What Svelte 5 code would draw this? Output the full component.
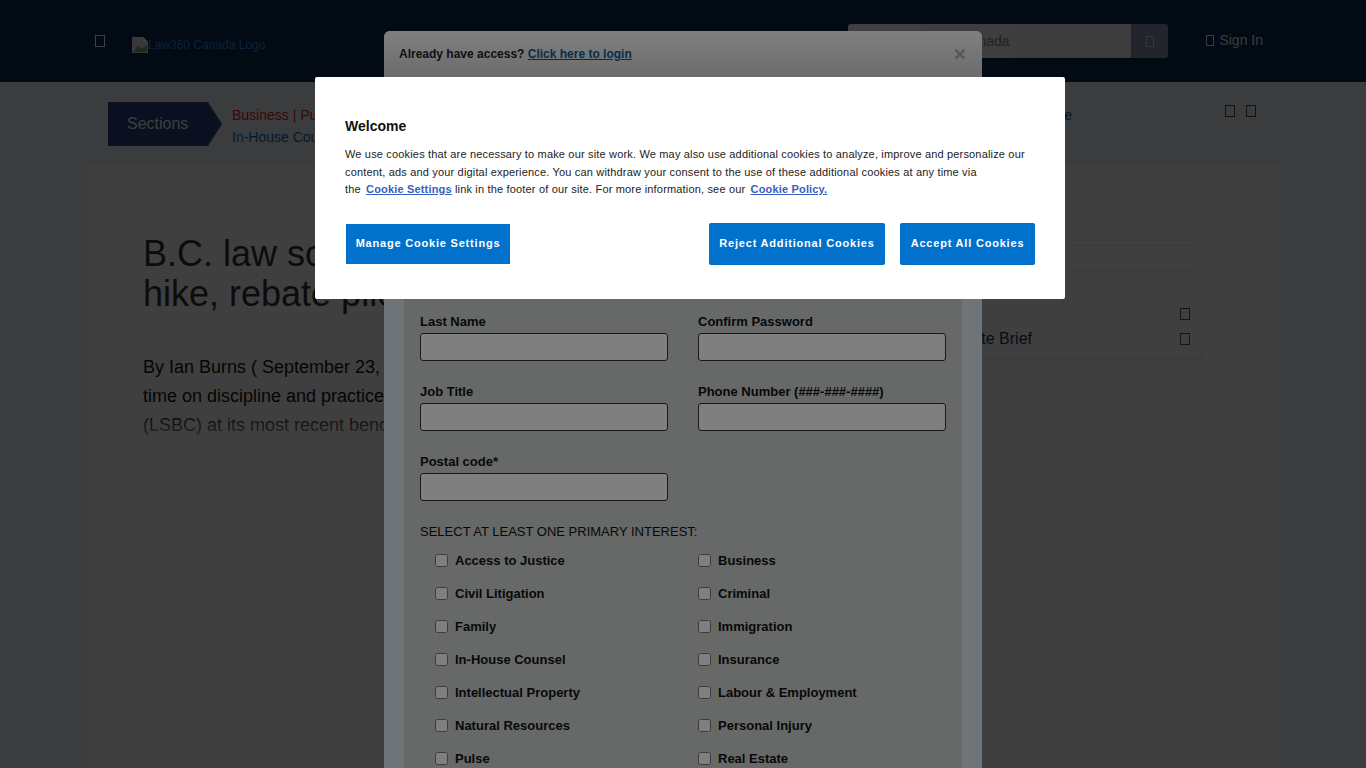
<script>
  const navLead = 'Business | Pulse | Access to Justice | Civil Litigation | Criminal | Family | Immigration | Insurance |';
  const fields = [
    ['First Name', 'Password'],
    ['Last Name', 'Confirm Password'],
    ['Job Title', 'Phone Number (###-###-####)'],
    ['Postal code*', null]
  ];
  const interests = [
    'Access to Justice', 'Business', 'Civil Litigation', 'Criminal', 'Family', 'Immigration',
    'In-House Counsel', 'Insurance', 'Intellectual Property', 'Labour & Employment',
    'Natural Resources', 'Personal Injury', 'Pulse', 'Real Estate'
  ];
</script>

<div class="page">
  <header class="topbar">
    <div class="brand">
      <span class="tofu menu"></span>
      <span class="logo">
        <svg class="broken" width="16" height="16" viewBox="0 0 16 16" aria-hidden="true">
          <path d="M0 0H11L16 5V16H0Z" fill="#e4e4e4" />
          <path d="M1 15L6 9L10 12L15 8V15Z" fill="#7fae6a" />
          <path d="M11 0L16 5H11Z" fill="#fff" />
        </svg>
        <span>Law360 Canada Logo</span>
      </span>
    </div>
    <div class="tools">
      <div class="search">
        <span class="field">Search Law360 Canada</span>
        <span class="go"><span class="tofu small"></span></span>
      </div>
      <span class="signin"><span class="tofu small"></span>Sign In</span>
    </div>
  </header>

  <div class="sections">
    <div class="tag">Sections</div>
    <div class="links">
      <div class="row red"><span>{navLead}</span><span class="last">Real Estate</span></div>
      <div class="row blue">In-House Counsel</div>
    </div>
    <div class="share"><span class="tofu"></span><span class="tofu"></span></div>
  </div>

  <main class="card">
    <article class="article">
      <h1>B.C. law society approves fee<br />hike, rebate pilot program</h1>
      <div class="story">
        <p>By Ian Burns ( September 23, 2024, 3:42 PM EDT) -- The Law Society of British<br />time on discipline and practice issues was discussed by the Law Society of BC<br />(LSBC) at its most recent bencher meeting</p>
        <div class="fade"></div>
      </div>
    </article>
    <aside class="side">
      <div class="rule first"></div>
      <div class="rule second"></div>
      <div class="side-row"><span>Daily Newsletter</span><span class="tofu"></span></div>
      <div class="side-row"><span>Law360 Corporate Brief</span><span class="tofu"></span></div>
    </aside>
  </main>
</div>

<div class="dim first-dim"></div>

<section class="modal">
  <div class="modal-head">
    <span class="access">Already have access? <a href="#login">Click here to login</a></span>
    <span class="close">×</span>
  </div>
  <div class="modal-body">
    <form class="form">
      <div class="grid">
        {#each fields as pair}
          {#each pair as label}
            <div class="control">
              {#if label}
                <span class="label">{label}</span>
                <span class="input"></span>
              {/if}
            </div>
          {/each}
        {/each}
      </div>
      <p class="select">SELECT AT LEAST ONE PRIMARY INTEREST:</p>
      <div class="checks">
        {#each interests as item}
          <label class="check"><input type="checkbox" /><span>{item}</span></label>
        {/each}
      </div>
    </form>
  </div>
</section>

<div class="dim second-dim"></div>

<section class="cookie">
  <h2>Welcome</h2>
  <p>We use cookies that are necessary to make our site work. We may also use additional cookies to analyze, improve and personalize our<br />content, ads and your digital experience. You can withdraw your consent to the use of these additional cookies at any time via<br />the <a href="#settings">Cookie Settings</a> link in the footer of our site. For more information, see our <a href="#policy">Cookie Policy.</a></p>
  <div class="actions">
    <button class="manage">Manage Cookie Settings</button>
    <div class="right">
      <button class="reject">Reject Additional Cookies</button>
      <button class="accept">Accept All Cookies</button>
    </div>
  </div>
</section>

<style>
  :global(html), :global(body) {
    margin: 0;
    height: 100%;
    overflow: hidden;
  }
  :global(body) {
    font-family: "Liberation Sans", Arial, sans-serif;
    background: #eef1f3;
  }

  .page {
    height: 768px;
    overflow: hidden;
    background: #eef3f5;
  }
  .tofu {
    display: inline-block;
    box-sizing: border-box;
    width: 10px;
    height: 12px;
    border: 1px solid currentColor;
    flex: none;
  }
  .tofu.small {
    width: 8px;
    height: 11px;
  }

  .topbar {
    height: 82px;
    box-sizing: border-box;
    background: #082850;
    display: flex;
    justify-content: space-between;
    padding: 24px 103px 0 95px;
    color: #e8f0f4;
  }
  .brand {
    display: flex;
    align-items: flex-start;
    gap: 27px;
  }
  .menu {
    margin-top: 11px;
    color: #fff;
  }
  .logo {
    display: flex;
    align-items: center;
    margin-top: 13px;
    font-size: 12px;
    line-height: 16px;
    color: #3088e0;
  }
  .tools {
    display: flex;
    align-items: flex-start;
    gap: 38px;
  }
  .search {
    display: flex;
    width: 320px;
    height: 34px;
    border-radius: 3px;
    overflow: hidden;
  }
  .field {
    flex: 1;
    background: linear-gradient(90deg, #fff, #f2f2f2);
    color: #888;
    font-size: 14px;
    line-height: 34px;
    padding-left: 11px;
    border-right: 1px solid #888;
  }
  .go {
    width: 36px;
    background: #8c96b4;
    color: #d8e0e8;
    display: flex;
    align-items: center;
    justify-content: center;
  }
  .signin {
    display: flex;
    align-items: center;
    gap: 5px;
    font-size: 14px;
    line-height: 32px;
  }

  .sections {
    display: flex;
    align-items: flex-start;
    height: 83px;
    box-sizing: border-box;
    padding: 20px 110px 0 108px;
  }
  .tag {
    position: relative;
    width: 100px;
    height: 44px;
    flex: none;
    box-sizing: border-box;
    padding-left: 19px;
    background: #29417d;
    color: #f6f8fa;
    font-size: 16px;
    line-height: 43px;
  }
  .tag::after {
    content: "";
    position: absolute;
    left: 100px;
    top: 0;
    border-left: 14px solid #29417d;
    border-top: 22px solid transparent;
    border-bottom: 22px solid transparent;
  }
  .links {
    margin-left: 24px;
    font-size: 14px;
    line-height: 22px;
    width: 840px;
    flex: none;
    margin-top: 2px;
  }
  .row {
    white-space: nowrap;
  }
  .red {
    display: flex;
    justify-content: space-between;
    color: #e01f26;
  }
  .last {
    color: #0d4ea0;
  }
  .blue {
    color: #0d6bb0;
  }
  .share {
    display: flex;
    gap: 11px;
    margin-left: 153px;
    margin-top: 3px;
    color: #444;
  }

  .card {
    margin: 0 86px 0 88px;
    height: 603px;
    background: #fff;
    box-sizing: border-box;
    padding: 69px 78px 0 55px;
    display: flex;
    justify-content: space-between;
    color: #222;
  }
  .article {
    width: 660px;
  }
  h1 {
    margin: 0;
    font-size: 36px;
    line-height: 40px;
    font-weight: 400;
    color: #333;
    white-space: nowrap;
  }
  .story {
    position: relative;
    margin-top: 39px;
  }
  .story p {
    margin: 0;
    font-size: 18px;
    line-height: 29px;
    color: #111;
    white-space: nowrap;
  }
  .fade {
    position: absolute;
    left: 0;
    right: -60px;
    top: 58px;
    height: 40px;
    background: linear-gradient(180deg, rgba(255, 255, 255, 0), rgba(255, 255, 255, 0.95));
  }
  .side {
    width: 352px;
    height: 126px;
    box-sizing: border-box;
    border: 1px solid #ececec;
    padding: 10px 9px 0 10px;
  }
  .rule {
    border-top: 1px solid #e8e8e8;
  }
  .rule.second {
    margin-top: 24px;
    margin-bottom: 30px;
  }
  .side-row {
    display: flex;
    justify-content: space-between;
    align-items: center;
    height: 25px;
    font-size: 16px;
    color: #15395c;
    padding: 0 2px;
  }
  .side-row .tofu {
    color: #555;
  }

  .dim {
    position: fixed;
    inset: 0;
    background: rgba(0, 0, 0, 0.5);
  }
  .first-dim {
    z-index: 10;
  }
  .second-dim {
    z-index: 30;
  }

  .modal {
    position: fixed;
    z-index: 20;
    left: 384px;
    top: 31px;
    width: 598px;
    height: 1100px;
    border-radius: 6px 6px 0 0;
    background: #fff;
    overflow: hidden;
    color: #111;
  }
  .modal-head {
    height: 46px;
    display: flex;
    justify-content: space-between;
    align-items: center;
    padding: 0 15px;
    background: linear-gradient(180deg, #fff, #d8d8d8);
  }
  .access {
    font-size: 12px;
    font-weight: 700;
    color: #222;
  }
  .access a {
    color: #0a5d9c;
  }
  .close {
    font-size: 21px;
    font-weight: 700;
    color: #aaa;
    margin-right: 1px;
  }
  .modal-body {
    background: #dde8ee;
    padding: 0 20px;
    height: 100%;
  }
  .form {
    background: #ccd2d0;
    padding: 158px 16px 0;
    height: 100%;
    box-sizing: border-box;
  }
  .grid {
    display: grid;
    grid-template-columns: 248px 248px;
    column-gap: 30px;
    row-gap: 14px;
  }
  .control {
    height: 56px;
    display: flex;
    flex-direction: column;
  }
  .label {
    box-sizing: border-box;
    font-size: 13px;
    font-weight: 700;
    line-height: 16px;
    height: 28px;
    padding-top: 9px;
    color: #111;
  }
  .input {
    height: 28px;
    box-sizing: border-box;
    border: 1px solid #333;
    border-radius: 3px;
    background: #fff;
  }
  .select {
    margin: 21px 0 0;
    font-size: 13px;
    line-height: 20px;
    color: #111;
  }
  .checks {
    display: grid;
    grid-template-columns: 263px 1fr;
    margin-top: 2px;
    padding-left: 15px;
  }
  .check {
    display: flex;
    align-items: center;
    height: 33px;
    font-size: 13px;
    font-weight: 700;
    color: #111;
  }
  .check input {
    margin: 0 7px 0 0;
    width: 13px;
    height: 13px;
  }

  .cookie {
    position: fixed;
    z-index: 40;
    left: 315px;
    top: 77px;
    width: 750px;
    height: 222px;
    box-sizing: border-box;
    background: #fff;
    border-radius: 2px;
    padding: 40px 30px 0;
    color: #222;
  }
  h2 {
    margin: 0;
    font-size: 14px;
    line-height: 18px;
    font-weight: 700;
    color: #111;
  }
  .cookie p {
    margin: 11px 0 0;
    font-size: 11px;
    line-height: 17.5px;
    letter-spacing: 0.17px;
    white-space: nowrap;
    color: #222;
  }
  .cookie a {
    color: #3860be;
    font-weight: 700;
    margin-left: 2px;
  }
  .actions {
    display: flex;
    justify-content: space-between;
    align-items: center;
    margin-top: 24px;
    padding-left: 1px;
  }
  .right {
    display: flex;
    gap: 15px;
  }
  button {
    font-family: inherit;
    font-size: 11px;
    font-weight: 700;
    letter-spacing: 0.8px;
    color: #fff;
    background: #0271cc;
    border: 0;
    padding: 0 0 2px;
    border-radius: 2px;
    height: 42px;
  }
  .manage {
    width: 164px;
    height: 40px;
    border-radius: 0;
  }
  .reject {
    width: 176px;
  }
  .accept {
    width: 135px;
  }
</style>
